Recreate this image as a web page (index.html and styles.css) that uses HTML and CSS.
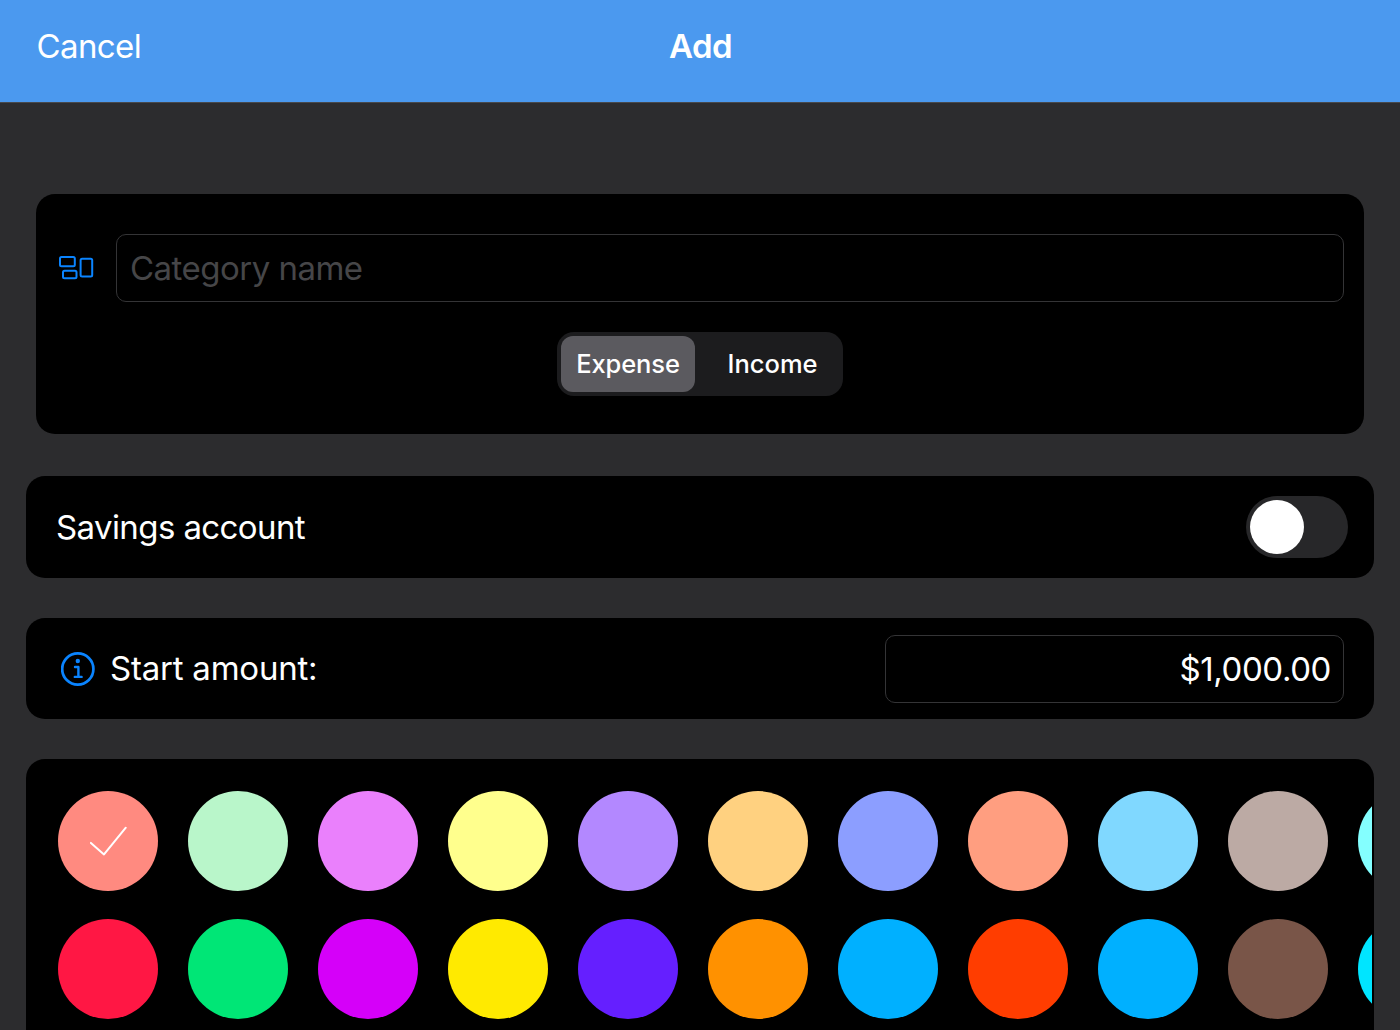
FILE: index.html
```html
<!DOCTYPE html>
<html lang="en">
<head>
<meta charset="utf-8">
<title>Add</title>
<link rel="stylesheet" href="styles.css">
</head>
<body>
<header class="navbar">
  <a class="cancel">Cancel</a>
  <h1 class="title">Add</h1>
</header>
<main class="form">
  <section class="card category">
    <div class="category-row">
      <svg class="category-icon" width="36" height="26" viewBox="0 0 36 26" fill="none" stroke="#0a84ff" stroke-width="2">
        <rect x="2" y="2" width="14.8" height="9.2" rx="1.5"/>
        <rect x="5" y="15.7" width="13.5" height="7.5" rx="1.5"/>
        <rect x="22.6" y="3.8" width="11.6" height="17.8" rx="1.5"/>
      </svg>
      <div class="field name-field"><span class="placeholder">Category name</span></div>
    </div>
    <div class="segmented">
      <div class="segment selected"><span>Expense</span></div>
      <div class="segment"><span>Income</span></div>
    </div>
  </section>
  <section class="card savings">
    <span class="savings-label">Savings account</span>
    <div class="switch"><div class="knob"></div></div>
  </section>
  <section class="card amount">
    <svg class="info-icon" width="34" height="34" viewBox="0 0 34 34" fill="none" stroke="#0a84ff">
      <circle cx="16.8" cy="17" r="15.6" stroke-width="2.7"/>
      <circle cx="16.8" cy="9" r="2.2" fill="#0a84ff" stroke="none"/>
      <path d="M14 15h3.4v9.9M13.8 24.9h6.8" stroke-width="2.4" stroke-linecap="round" stroke-linejoin="round"/>
    </svg>
    <span class="amount-label">Start amount:</span>
    <div class="field amount-field"><span class="value">$1,000.00</span></div>
  </section>
  <section class="card colors">
    <div class="palette">
      <div class="swatch salmon">
        <svg width="40" height="32" viewBox="0 0 40 32" fill="none" stroke="#fff" stroke-width="2" stroke-linecap="round" stroke-linejoin="round"><path d="M2.9 17.9 16 29.4 37.8 2.7"/></svg>
      </div>
      <div class="swatch mint"></div>
      <div class="swatch orchid"></div>
      <div class="swatch lemon"></div>
      <div class="swatch lavender"></div>
      <div class="swatch apricot"></div>
      <div class="swatch periwinkle"></div>
      <div class="swatch coral"></div>
      <div class="swatch sky"></div>
      <div class="swatch taupe"></div>
      <div class="swatch aqua"></div>
      <div class="swatch red"></div>
      <div class="swatch green"></div>
      <div class="swatch magenta"></div>
      <div class="swatch yellow"></div>
      <div class="swatch violet"></div>
      <div class="swatch orange"></div>
      <div class="swatch blue"></div>
      <div class="swatch vermilion"></div>
      <div class="swatch blue"></div>
      <div class="swatch brown"></div>
      <div class="swatch cyan"></div>
    </div>
  </section>
</main>
</body>
</html>
```
FILE: styles.css
```css
* { box-sizing: border-box; }
body {
  margin: 0;
  height: 1030px;
  overflow: hidden;
  background: #2c2c2e;
  color: #fff;
  font-family: Inter, "Liberation Sans", sans-serif;
  font-size: 33px;
  line-height: 40px;
}
svg { display: block; flex: none; }
span, a { white-space: nowrap; }
.navbar {
  display: grid;
  grid-template-columns: 1fr auto 1fr;
  height: 103px;
  padding: 26px 36px 0;
  background: #4b99ef;
  border-bottom: 1px solid #48494c;
}
.cancel { padding-left: 0.5px; letter-spacing: -0.6px; }
.title { margin: 0; padding-left: 1px; font-size: 33px; font-weight: 600; letter-spacing: -0.5px; }
.form { padding: 91px 26px 0; }
.card { background: #000; border-radius: 19px; }
.category { height: 240px; margin: 0 10px 42px; padding: 40px 20px 0; }
.category-row { display: flex; align-items: center; gap: 22px; padding-left: 2px; }
.field {
  display: flex;
  align-items: center;
  height: 68px;
  border: 1px solid #343436;
  border-radius: 10px;
}
.name-field { flex: 1; padding-left: 13px; }
.placeholder { color: #464648; letter-spacing: -0.52px; }
.segmented {
  display: flex;
  width: 286px;
  height: 64px;
  margin: 30px auto 0;
  padding: 4px;
  border-radius: 17px;
  background: #1c1c1e;
}
.segment {
  display: flex;
  flex: 1;
  align-items: center;
  justify-content: center;
  padding-left: 11px;
  font-size: 25.5px;
  font-weight: 450;
  letter-spacing: 0;
}
.segment.selected {
  flex: none;
  width: 134px;
  padding-left: 0;
  border-radius: 12px;
  background: #5b5a5f;
  font-weight: 550;
  letter-spacing: -0.1px;
}
.savings {
  display: flex;
  align-items: center;
  justify-content: space-between;
  height: 102px;
  margin-bottom: 40px;
  padding: 0 26px 0 30px;
}
.savings-label { letter-spacing: -0.6px; }
.switch { width: 102px; height: 62px; padding: 4px; border-radius: 31px; background: #272729; }
.knob { width: 54px; height: 54px; border-radius: 50%; background: #fff; }
.amount {
  display: flex;
  align-items: center;
  height: 101px;
  margin-bottom: 40px;
  padding: 0 30px 0 35px;
}
.amount-label { margin-left: 15px; padding-bottom: 2px; letter-spacing: -0.22px; }
.amount-field { width: 459px; margin-left: auto; padding-right: 12px; justify-content: flex-end; }
.value { letter-spacing: -0.4px; }
.colors { height: 300px; padding: 32px 2px 0 32px; }
.palette {
  display: grid;
  grid-template-columns: repeat(11, 100px);
  gap: 28px 30px;
  overflow: hidden;
}
.swatch { display: flex; align-items: center; justify-content: center; height: 100px; border-radius: 50%; }
.salmon { background: #ff8a80; }
.mint { background: #b9f6ca; }
.orchid { background: #ea80fc; }
.lemon { background: #ffff8d; }
.lavender { background: #b388ff; }
.apricot { background: #ffd180; }
.periwinkle { background: #8c9eff; }
.coral { background: #ff9e80; }
.sky { background: #80d8ff; }
.taupe { background: #bcaaa4; }
.aqua { background: #84ffff; }
.red { background: #ff1744; }
.green { background: #00e676; }
.magenta { background: #d500f9; }
.yellow { background: #ffea00; }
.violet { background: #651fff; }
.orange { background: #ff9100; }
.blue { background: #00b0ff; }
.vermilion { background: #ff3d00; }
.brown { background: #795548; }
.cyan { background: #00e5ff; }
```
